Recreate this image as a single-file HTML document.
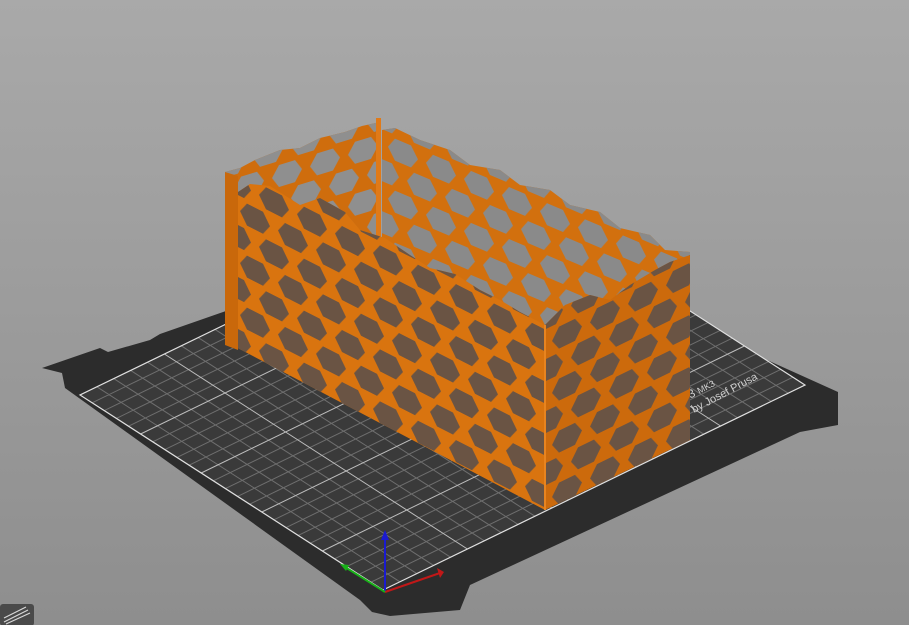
<!DOCTYPE html>
<html><head><meta charset="utf-8"><style>
html,body{margin:0;padding:0;width:909px;height:625px;overflow:hidden;background:#9a9a9a}
svg{display:block}
</style></head><body>
<svg width="909" height="625" viewBox="0 0 909 625" xmlns="http://www.w3.org/2000/svg">
<defs>
<linearGradient id="bg" x1="0" y1="0" x2="0" y2="1">
<stop offset="0" stop-color="#a9a9a9"/><stop offset="1" stop-color="#8e8e8e"/>
</linearGradient>
<g id="hx">
<polygon points="4,13 11,2 27,2 34,13 27,24 11,24"/>
<polygon points="-15,39 -8,28 8,28 15,39 8,50 -8,50"/>
<polygon points="23,39 30,28 46,28 53,39 46,50 30,50"/>
</g>
<pattern id="hexF" width="38" height="52" patternUnits="userSpaceOnUse" patternTransform="translate(236,196) skewY(27)">
<use href="#hx" fill="#6a5444"/>
</pattern>
<pattern id="hexR" width="38" height="52" patternUnits="userSpaceOnUse" patternTransform="translate(548,330) skewY(-26)">
<use href="#hx" fill="#6a5444"/>
</pattern>
<pattern id="hexB" width="38" height="52" patternUnits="userSpaceOnUse" patternTransform="translate(384,132) skewY(23)">
<use href="#hx" fill="#8a8a8a"/>
</pattern>
<pattern id="hexBL" width="38" height="52" patternUnits="userSpaceOnUse" patternTransform="translate(230,178) skewY(-17)">
<use href="#hx" fill="#8f8f8f"/>
</pattern>
<clipPath id="gclip"><polygon points="383,590 805,385 502,190 80,395"/></clipPath>
</defs>
<rect width="909" height="625" fill="url(#bg)"/>
<polygon points="42,368 100,348 108,352 150,340 160,334 470,226 838,392 838,425 800,432 470,585 460,610 390,616 372,612 360,600 65,388 62,373" fill="#2c2c2c"/>
<polygon points="383,590 805,385 502,190 80,395" fill="#3a3a3a"/>
<g clip-path="url(#gclip)">
<g transform="matrix(1.688,-0.82,-1.212,-0.78,383,590)" stroke="#6e6e6e" stroke-width="1">
<path vector-effect="non-scaling-stroke" d="M10,0V250M20,0V250M30,0V250M40,0V250M60,0V250M70,0V250M80,0V250M90,0V250M110,0V250M120,0V250M130,0V250M140,0V250M160,0V250M170,0V250M180,0V250M190,0V250M210,0V250M220,0V250M230,0V250M240,0V250M0,10H250M0,20H250M0,30H250M0,40H250M0,60H250M0,70H250M0,80H250M0,90H250M0,110H250M0,120H250M0,130H250M0,140H250M0,160H250M0,170H250M0,180H250M0,190H250M0,210H250M0,220H250M0,230H250M0,240H250"/>
<path vector-effect="non-scaling-stroke" stroke="#bdbdbd" d="M50,0V250M100,0V250M150,0V250M200,0V250M0,50H250M0,100H250M0,150H250M0,200H250"/>
</g>
</g>
<polygon points="383,590 805,385 502,190 80,395" fill="none" stroke="#e0e0e0" stroke-width="1.2"/>
<text x="0" y="0" transform="translate(694,413) rotate(-28)" font-family="Liberation Sans,sans-serif" font-size="11" fill="#d0d0d0">by Josef Prusa</text>
<text x="0" y="0" transform="translate(688,400) rotate(-28)" font-family="Liberation Sans,sans-serif" font-size="12" fill="#d0d0d0">i3 <tspan font-size="9">MK3</tspan></text>
<polygon points="382,130 395,128 420,140 450,150 470,165 500,170 520,185 550,190 570,205 600,212 620,228 650,235 665,250 690,252 690,440 382,300" fill="#d2700e"/>
<polygon points="382,130 395,128 420,140 450,150 470,165 500,170 520,185 550,190 570,205 600,212 620,228 650,235 665,250 690,252 690,440 382,300" fill="url(#hexB)"/>
<polygon points="225,172 240,168 255,160 280,150 300,148 320,138 345,132 362,126 380,122 380,300 225,345" fill="#cf6d0d"/>
<polygon points="225,172 240,168 255,160 280,150 300,148 320,138 345,132 362,126 380,122 380,300 225,345" fill="url(#hexBL)"/>
<rect x="376" y="118" width="5" height="150" fill="#e07a18"/>
<polygon points="232,196 250,184 270,186 300,205 320,198 345,212 360,230 385,238 410,255 430,268 455,274 480,290 500,300 520,312 545,325 545,510 232,345" fill="#d9740f"/>
<polygon points="232,196 250,184 270,186 300,205 320,198 345,212 360,230 385,238 410,255 430,268 455,274 480,290 500,300 520,312 545,325 545,510 232,345" fill="url(#hexF)"/>
<polygon points="225,172 238,176 238,350 225,345" fill="#c9680b"/>
<polygon points="545,325 565,305 590,295 610,300 630,285 655,270 670,262 690,255 690,440 545,510" fill="#cc6a0c"/>
<polygon points="545,325 565,305 590,295 610,300 630,285 655,270 670,262 690,255 690,440 545,510" fill="url(#hexR)"/>
<line x1="545" y1="325" x2="545" y2="510" stroke="#e8841f" stroke-width="2"/>
<line x1="385" y1="592" x2="385" y2="540" stroke="#1a1ad0" stroke-width="2"/>
<polygon points="381,540 389,540 385,530" fill="#1a1ad0"/>
<line x1="385" y1="592" x2="440" y2="573" stroke="#c01818" stroke-width="2"/>
<polygon points="437,568 444,572 440,578" fill="#c01818"/>
<line x1="385" y1="592" x2="345" y2="567" stroke="#18b018" stroke-width="2"/>
<polygon points="340,564 349,565 346,571" fill="#18b018"/>
<rect x="0" y="604" width="34" height="22" rx="3" fill="#4a4a4a"/>
<path d="M4,622 L28,610 M4,618 L26,607 M6,624 L30,613" stroke="#d8d8d8" stroke-width="1.2"/>
</svg>
</body></html>
